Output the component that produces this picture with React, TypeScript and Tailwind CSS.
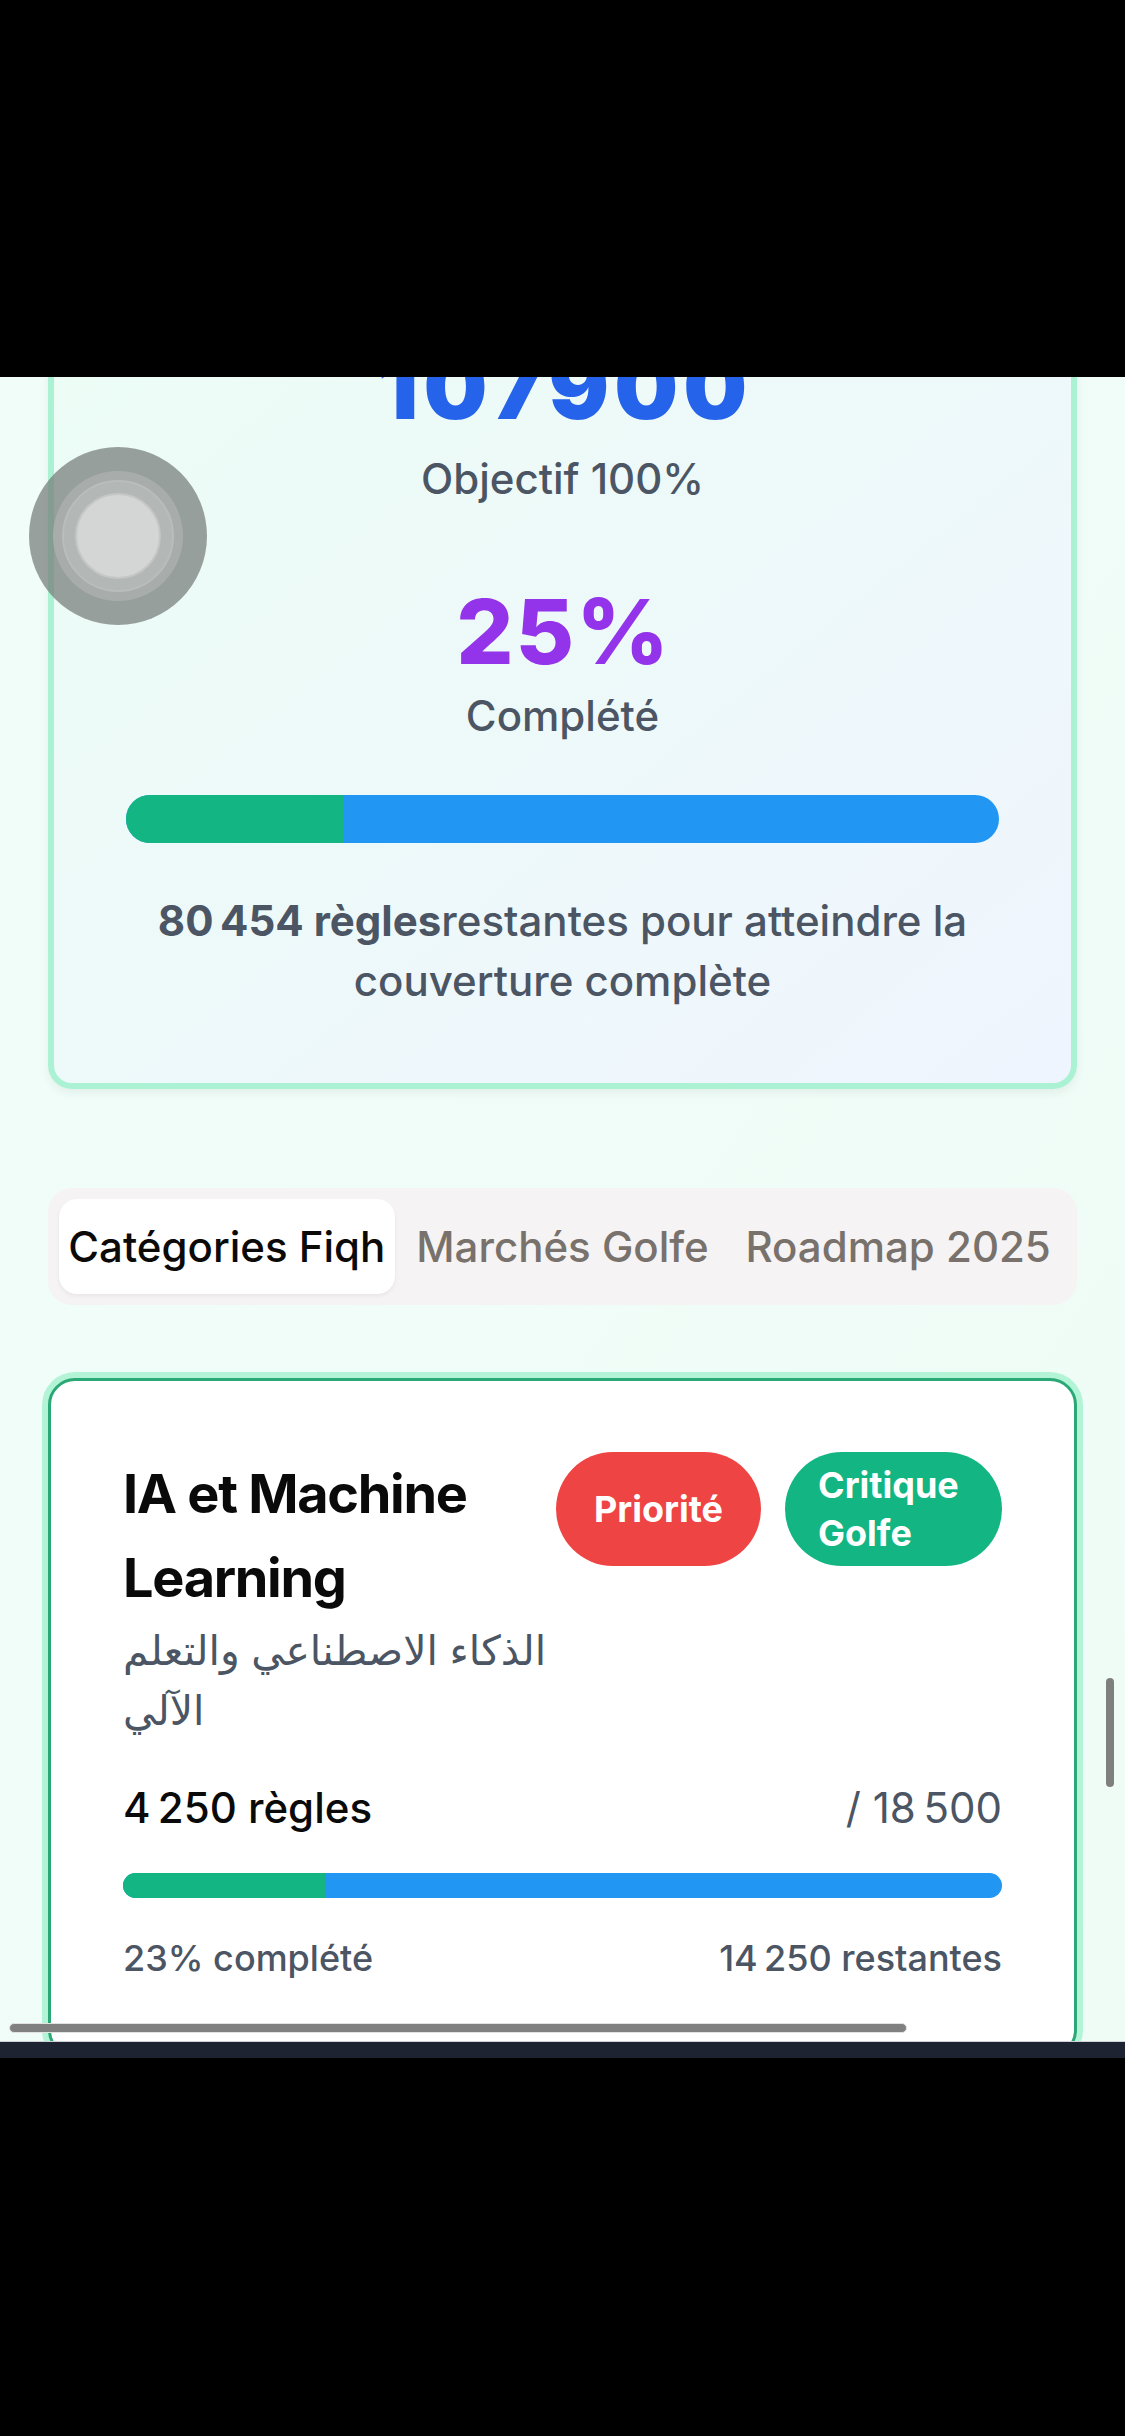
export default function App() {
  return (
    <div className="relative flex h-[2436px] w-[1125px] flex-col overflow-hidden bg-black font-[family-name:Inter,'DejaVu_Sans',sans-serif]">
      <div className="h-[377px] shrink-0 bg-black" />

      <div className="relative h-[1664px] shrink-0 overflow-hidden bg-linear-to-br from-[#f0fdf9] to-[#effcf6]">
        <div className="flex flex-col px-[48px]">
          {/* Summary card */}
          <div className="-mt-[122px] flex flex-col items-center rounded-[24px] border-[6px] border-[#aaf2d3] bg-linear-to-br from-[#ecfdf5] to-[#eff5fe] p-[72px] text-center shadow-[0_4px_10px_rgba(0,0,0,0.06)]">
            <div className="flex flex-col items-center">
              <span className="pl-[5px] text-[90px] font-black leading-[108px] tracking-[5px] text-[#2563eb]">107900</span>
              <span className="mt-[8px] text-[42px] font-medium leading-[60px] text-[#4b5563]">Objectif 100%</span>
            </div>
            <div className="mt-[69px] flex flex-col items-center">
              <span className="pl-[2px] text-[90px] font-extrabold leading-[108px] tracking-[2px] text-[#9333ea]">25%</span>
              <span className="text-[42px] font-medium leading-[60px] text-[#4b5563]">Complété</span>
            </div>
            <div className="mt-[49px] flex h-[48px] w-full overflow-hidden rounded-full bg-[#2196f3]">
              <div className="h-full w-1/4 bg-[#13b582]" />
            </div>
            <p className="mt-[48px] text-[42px] font-medium leading-[60px] text-[#4b5563]">
              <span className="font-bold">80&#8239;454 règles</span>restantes pour atteindre la couverture complète
            </p>
          </div>

          {/* Tabs */}
          <div className="mt-[99px] grid grid-cols-3 rounded-[24px] bg-[#f5f3f3] p-[11px]">
            <div className="flex h-[95px] items-center justify-center whitespace-nowrap rounded-[18px] bg-white text-[42px] font-medium text-[#0c0a09] shadow-[0_2px_4px_rgba(0,0,0,0.06)]">
              Catégories Fiqh
            </div>
            <div className="flex h-[95px] items-center justify-center whitespace-nowrap text-[42px] font-medium text-[#78716c]">
              Marchés Golfe
            </div>
            <div className="flex h-[95px] items-center justify-center whitespace-nowrap text-[42px] font-medium text-[#78716c]">
              Roadmap 2025
            </div>
          </div>

          {/* Category card */}
          <div className="mt-[73px] rounded-[27px] border-[3px] border-[#2aa876] bg-white px-[72px] pb-[72px] pt-[71px] shadow-[0_0_0_6px_#b3f4d7]">
            <div className="flex items-start">
              <div className="min-w-0 flex-1">
                <h3 className="text-[54px] font-bold leading-[84px] tracking-[-1.3px] text-[#0a0a0a]">IA et Machine Learning</h3>
                <p className="text-[41px] leading-[60px] text-[#4b5563]">الذكاء الاصطناعي والتعلم الآلي</p>
              </div>
              <div className="flex shrink-0 gap-[24px]">
                <span className="flex w-[205px] items-center justify-center rounded-full border-[3px] border-transparent bg-[#ef4444] py-[6px] text-[36px] font-bold leading-[48px] text-white">
                  Priorité
                </span>
                <span className="flex w-[217px] items-center rounded-full border-[3px] border-transparent bg-[#13b582] px-[30px] py-[6px] text-left text-[36px] font-bold leading-[48px] text-white">
                  Critique Golfe
                </span>
              </div>
            </div>

            <div className="mt-[38px] flex items-center justify-between text-[42px] leading-[60px]">
              <span className="font-medium text-[#0a0a0a]">4&#8239;250 règles</span>
              <span className="text-[#4b5563]">/ 18&#8239;500</span>
            </div>

            <div className="mt-[35px] flex h-[25px] w-full overflow-hidden rounded-full bg-[#2196f3]">
              <div className="h-full w-[23%] bg-[#13b582]" />
            </div>

            <div className="mt-[36px] flex items-center justify-between text-[36px] font-medium leading-[48px] text-[#4b5563]">
              <span>23% complété</span>
              <span>14&#8239;250 restantes</span>
            </div>
          </div>
        </div>

        {/* Assistive touch overlay */}
        <div className="absolute left-[29px] top-[70px] flex h-[178px] w-[178px] items-center justify-center rounded-full bg-[rgba(118,124,121,0.72)]">
          <div className="flex h-[130px] w-[130px] items-center justify-center rounded-full bg-[#a8adab]">
            <div className="flex h-[112px] w-[112px] items-center justify-center rounded-full border-[2px] border-[#b9bdbb] bg-[#b3b7b5]">
              <div className="h-[86px] w-[86px] rounded-full border-[2px] border-[#c4c7c6] bg-[#d4d6d5]" />
            </div>
          </div>
        </div>

        {/* Scroll indicators */}
        <div className="absolute right-[11px] top-[1301px] h-[109px] w-[8px] rounded-full bg-[#7f7f7f]" />
        <div className="absolute left-[9px] top-[1646px] h-[10px] w-[898px] rounded-full border border-[#e2e2e2] bg-[#808080]" />
      </div>

      <div className="h-[17px] shrink-0 border-t border-[#cfd3d8] bg-[#1e2332]" />
      <div className="flex-1 bg-black" />
    </div>
  );
}
